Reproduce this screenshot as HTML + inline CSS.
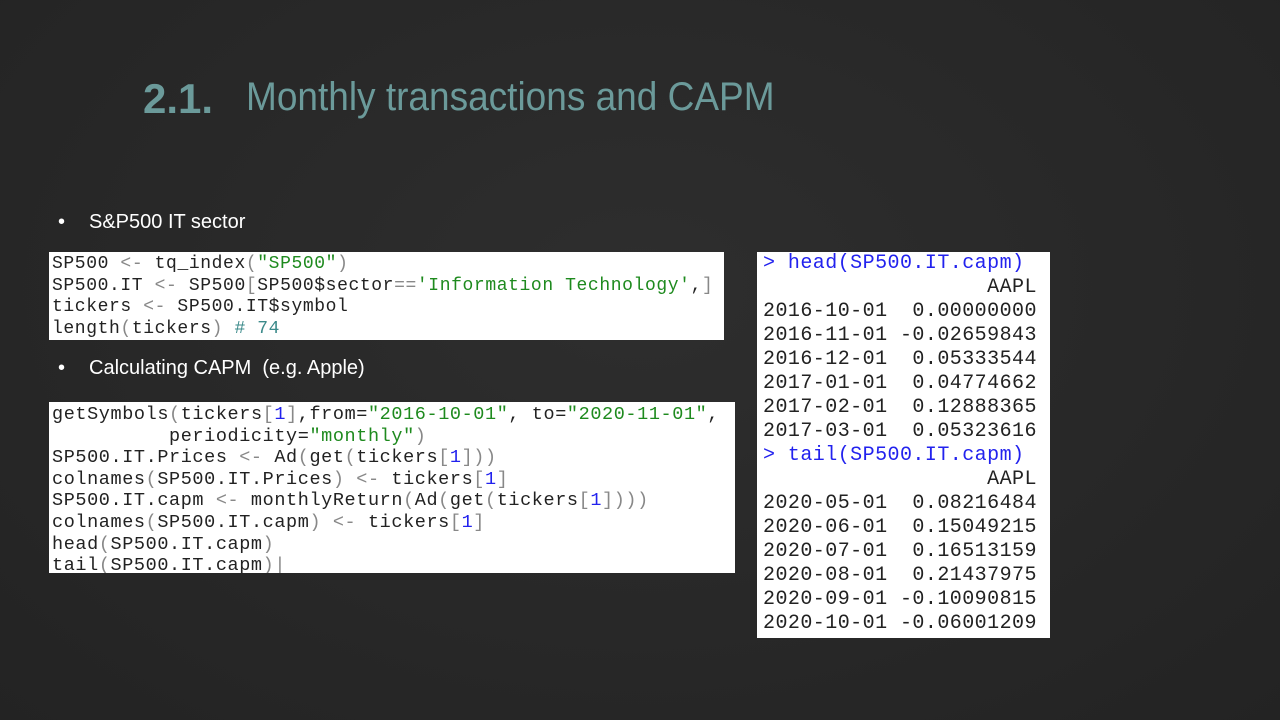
<!DOCTYPE html>
<html><head><meta charset="utf-8"><style>
body{margin:0;width:1280px;height:720px;background:#282828;background:radial-gradient(ellipse at 50% 40%,#2e2e2e,#232323);overflow:hidden;position:relative;font-family:"Liberation Sans",sans-serif}
.t{position:absolute;color:#6b9a9a;white-space:nowrap}
.b{position:absolute;color:#fff;font-size:20px;white-space:nowrap}
.box{position:absolute;background:#fff;font-family:"Liberation Mono",monospace;color:#222;white-space:pre;overflow:hidden}
.c1{font-size:18px;letter-spacing:0.6px;line-height:21.6px;padding:2px 0 0 3px;box-sizing:border-box}
.g{color:#1e8a1e}.bl{color:#2222ee}.gr{color:#888}.cm{color:#3b8a8a}
.c3{font-size:20px;letter-spacing:0.45px;line-height:24px;padding:0 0 0 6px;box-sizing:border-box}
.c3 .p{color:#2222ee}
</style></head><body>
<div class="t" style="left:143px;top:75px;font-size:42px;font-weight:bold">2.1.</div>
<div class="t" style="left:246px;top:75px;font-size:40px;transform:scaleX(0.925);transform-origin:left">Monthly transactions and CAPM</div>
<div class="b" style="left:58px;top:211px">•</div><div class="b" style="left:89px;top:211px">S&amp;P500 IT sector</div>
<div class="b" style="left:58px;top:357px">•</div><div class="b" style="left:89px;top:357px">Calculating CAPM&nbsp; (e.g. Apple)</div>
<div class="box c1" style="left:49px;top:252px;width:675px;height:88px">SP500 <span class="gr">&lt;-</span> tq_index<span class="gr">(</span><span class="g">"SP500"</span><span class="gr">)</span>
SP500.IT <span class="gr">&lt;-</span> SP500<span class="gr">[</span>SP500$sector<span class="gr">==</span><span class="g">'Information Technology'</span>,<span class="gr">]</span>
tickers <span class="gr">&lt;-</span> SP500.IT$symbol
length<span class="gr">(</span>tickers<span class="gr">)</span> <span class="cm"># 74</span></div>
<div class="box c1" style="left:49px;top:402px;width:686px;height:171px;font-size:18.5px">getSymbols<span class="gr">(</span>tickers<span class="gr">[</span><span class="bl">1</span><span class="gr">]</span>,from=<span class="g">"2016-10-01"</span>, to=<span class="g">"2020-11-01"</span>,
          periodicity=<span class="g">"monthly"</span><span class="gr">)</span>
SP500.IT.Prices <span class="gr">&lt;-</span> Ad<span class="gr">(</span>get<span class="gr">(</span>tickers<span class="gr">[</span><span class="bl">1</span><span class="gr">]))</span>
colnames<span class="gr">(</span>SP500.IT.Prices<span class="gr">)</span> <span class="gr">&lt;-</span> tickers<span class="gr">[</span><span class="bl">1</span><span class="gr">]</span>
SP500.IT.capm <span class="gr">&lt;-</span> monthlyReturn<span class="gr">(</span>Ad<span class="gr">(</span>get<span class="gr">(</span>tickers<span class="gr">[</span><span class="bl">1</span><span class="gr">])))</span>
colnames<span class="gr">(</span>SP500.IT.capm<span class="gr">)</span> <span class="gr">&lt;-</span> tickers<span class="gr">[</span><span class="bl">1</span><span class="gr">]</span>
head<span class="gr">(</span>SP500.IT.capm<span class="gr">)</span>
tail<span class="gr">(</span>SP500.IT.capm<span class="gr">)|</span></div>
<div class="box c3" style="left:757px;top:252px;width:293px;height:386px"><span class="p">&gt; head(SP500.IT.capm)</span>
                  AAPL
2016-10-01  0.00000000
2016-11-01 -0.02659843
2016-12-01  0.05333544
2017-01-01  0.04774662
2017-02-01  0.12888365
2017-03-01  0.05323616
<span class="p">&gt; tail(SP500.IT.capm)</span>
                  AAPL
2020-05-01  0.08216484
2020-06-01  0.15049215
2020-07-01  0.16513159
2020-08-01  0.21437975
2020-09-01 -0.10090815
2020-10-01 -0.06001209</div>
</body></html>
